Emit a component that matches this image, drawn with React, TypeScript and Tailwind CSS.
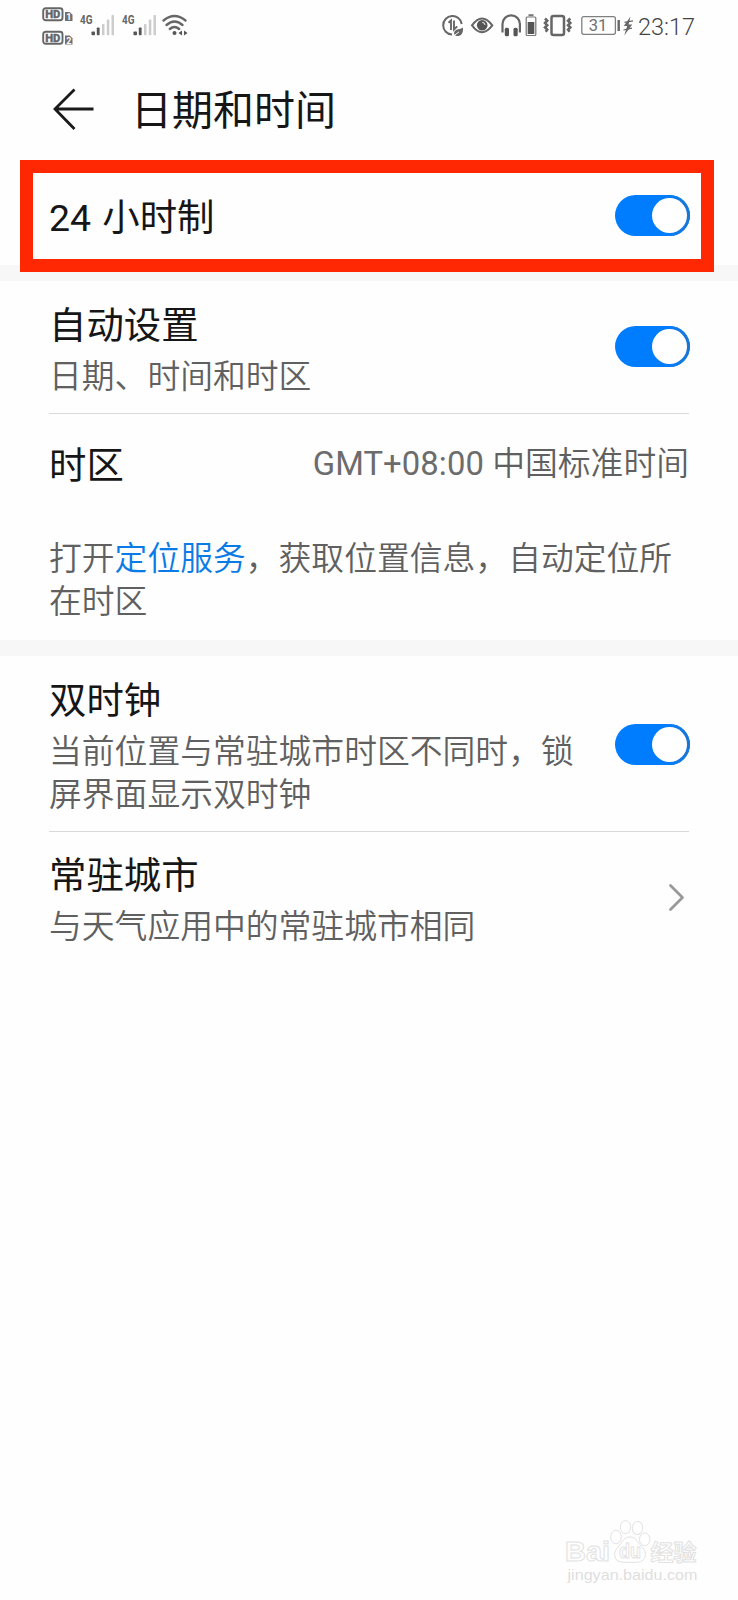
import type { ReactNode } from "react";

function Toggle() {
  return (
    <button
      type="button"
      role="switch"
      aria-checked="true"
      className="flex h-[41px] w-[75.5px] shrink-0 items-center justify-end rounded-full bg-[#007dff]"
    >
      <span className="flex h-[41px] w-[42px] items-center justify-center rounded-full bg-linear-to-r from-[#007dff] from-45% to-[#1b76cf]">
        <span className="h-[35px] w-[35px] rounded-full bg-white" />
      </span>
    </button>
  );
}

function Title({ children }: { children: ReactNode }) {
  return <div className="text-[37.4px] leading-[50px] font-normal text-[#161616]">{children}</div>;
}

function Summary({ children }: { children: ReactNode }) {
  return <div className="text-[32.8px] leading-[43px] text-[#606060]">{children}</div>;
}

function SignalBars({ x }: { x: number }) {
  return (
    <g transform={`translate(${x} 0)`}>
      <text x="0" y="24" fontSize="12.5" fontWeight="700" fill="#666" textLength="12.5" lengthAdjust="spacingAndGlyphs">4G</text>
      <rect x="11.5" y="31.5" width="3.5" height="3.8" rx="0.8" fill="#555" />
      <rect x="16.8" y="27.5" width="2.8" height="7.8" rx="0.8" fill="#555" />
      <rect x="22" y="24" width="2.5" height="11.3" rx="0.8" fill="#ccc" />
      <rect x="26.8" y="19.5" width="2.5" height="15.8" rx="0.8" fill="#ccc" />
      <rect x="31.5" y="15" width="2.5" height="20.3" rx="0.8" fill="#ccc" />
    </g>
  );
}

function HdBadge({ y, n }: { y: number; n: string }) {
  return (
    <g transform={`translate(42 ${y})`}>
      <rect x="1.2" y="1.2" width="19.300" height="12" rx="2.500" fill="#fff" stroke="#666" strokeWidth="1.900" />
      <text x="3.2" y="11.300" fontSize="11.500" fontWeight="900" fill="#666" stroke="#666" strokeWidth="0.300" textLength="15.200" lengthAdjust="spacingAndGlyphs">HD</text>
      <path d="M23 5h4.800l2.700 2.700v6.300H23z" fill="#707070" />
      <text x="24.200" y="13" fontSize="9" fontWeight="700" fill="#fff">{n}</text>
    </g>
  );
}

function StatusLeft() {
  return (
    <svg width="200" height="56" viewBox="0 0 200 56" className="font-[Roboto,sans-serif]">
      <HdBadge y={7} n="1" />
      <HdBadge y={30.5} n="2" />
      <SignalBars x={80} />
      <SignalBars x={122} />
      <g fill="none" stroke="#666" strokeWidth="2.4" strokeLinecap="round">
        <path d="M163.500 20.500Q174.500 11.500 185.500 20.500" />
        <path d="M166.500 25Q174.500 18 182.500 25" />
        <path d="M169.800 29Q174.500 24.800 179.200 29" />
      </g>
      <circle cx="174.500" cy="33" r="2" fill="#555" />
      <path d="M182 30.500v5l-3.500-2.500zM184 30.500v5l3.500-2.500z" fill="#555" />
    </svg>
  );
}

function StatusRight() {
  return (
    <svg width="198" height="56" viewBox="438 0 198 56" className="font-[Roboto,sans-serif]">
      <g fill="none" stroke="#666" strokeWidth="2">
        <path d="M461.700 24A9.300 9.300 0 1 0 452 34.600" />
        <path d="M448.500 22.800l2.500-2.300v9.500M454 20.500v9l3.200-3.200" strokeWidth="1.900" />
        <path d="M472 25.300Q482 11.500 492.300 25.300Q482 39 472 25.300Z" />
      </g>
      <path d="M463 27.500c.5 6-2 8.500-5.500 8.500-3 0-4.200-2.500-2.800-4.800 1.800-2.500 5-1.200 8.300-3.700z" fill="#666" />
      <path d="M454 35.800l5-4" stroke="#fff" strokeWidth="1" />
      <circle cx="482.200" cy="25.200" r="5.300" fill="#555" />
      <path d="M482.200 22.300a3 3 0 0 1 2.800 2.700" fill="none" stroke="#ccc" strokeWidth="1.200" />
      <path d="M502.500 32.500V24a8.700 8.700 0 0 1 17.400 0v8.500" fill="none" stroke="#666" strokeWidth="2.200" />
      <rect x="504.800" y="27.700" width="4.200" height="8.500" rx="1.500" fill="#555" />
      <rect x="513.500" y="27.700" width="4.200" height="8.500" rx="1.500" fill="#555" />
      <rect x="526.200" y="17" width="9.600" height="18.500" rx="1" fill="none" stroke="#777" strokeWidth="1.200" />
      <rect x="528.500" y="14.200" width="5" height="2" fill="#777" />
      <rect x="527.700" y="22" width="6.600" height="12" fill="#555" />
      <rect x="551.500" y="16" width="12.500" height="19" rx="2" fill="none" stroke="#666" strokeWidth="2.500" />
      <path d="M545 18.500l2.200 2.200-2.200 2.300 2.200 2.200-2.200 2.300 2.200 2.200-1.500 2M570.300 18.500l-2.200 2.200 2.200 2.300-2.200 2.200 2.200 2.300-2.200 2.200 1.500 2" fill="none" stroke="#666" strokeWidth="2.600" />
      <rect x="581.800" y="16.700" width="33.600" height="17.600" rx="2" fill="none" stroke="#808080" strokeWidth="1.300" />
      <text x="598" y="31.300" fontSize="16.500" fontWeight="400" fill="#707070" textAnchor="middle">31</text>
      <rect x="617.500" y="20" width="2.400" height="11" fill="#666" />
      <path d="M630.500 16.500l-6.700 9.500h3.400l-3 9.500 8-11h-3.600z" fill="#666" />
      <path d="M624.500 22.300l8.500-1.500M623.500 30l8.500-1.800" stroke="#666" strokeWidth="1.200" />
    </svg>
  );
}

function Watermark() {
  return (
    <svg
      width="140"
      height="70"
      viewBox="0 0 140 70"
      className="font-['Liberation_Sans','Noto_Sans_CJK_SC',sans-serif]"
      fill="#fff"
      stroke="#e2e2e2"
      strokeWidth="1"
    >
      <text x="3" y="41" fontSize="28" fontWeight="700" textLength="45" lengthAdjust="spacingAndGlyphs">Bai</text>
      <ellipse cx="54" cy="17" rx="5.300" ry="6.800" />
      <ellipse cx="63.500" cy="7.200" rx="5.200" ry="6.500" />
      <ellipse cx="75.500" cy="8" rx="5.200" ry="6.500" transform="rotate(8 75.500 8)" />
      <ellipse cx="82.700" cy="19.300" rx="5.200" ry="6.300" />
      <path d="M68 17c6 0 7.500 5 11 9 4 4 5 7 4 11-1.500 5-6 5.500-15 5.300-9 .2-13.500-.3-15-5.300-1-4 0-7 4-11 3.500-4 5-9 11-9z" />
      <text x="57" y="38" fontSize="21" fontWeight="700" textLength="22" lengthAdjust="spacingAndGlyphs">du</text>
      <text x="88.500" y="39.500" fontSize="22" fontWeight="700" textLength="46" lengthAdjust="spacingAndGlyphs">经验</text>
      <text x="5.500" y="60" fontSize="15" fontWeight="400" fill="#dedede" stroke="none" textLength="130" lengthAdjust="spacingAndGlyphs">jingyan.baidu.com</text>
    </svg>
  );
}

export default function App() {
  return (
    <div className="relative flex h-[1600px] w-[738px] flex-col overflow-hidden bg-[#fefefe] font-[Roboto,'Noto_Sans_CJK_SC',sans-serif] font-[350]">
      <div className="flex h-14 shrink-0 items-start justify-between pr-[42px]">
        <StatusLeft />
        <div className="flex">
          <StatusRight />
          <span className="ml-[2px] w-[58px] whitespace-nowrap pt-[12px] text-[23.5px] leading-[30px] font-light text-[#444]">23:17</span>
        </div>
      </div>

      <header className="flex h-[104px] shrink-0 items-center pb-[1px] pl-[52px]">
        <svg width="43" height="43" viewBox="0 0 43 43" fill="none" stroke="#1a1a1a" strokeWidth="2.800" className="mt-[3px]">
          <path d="M41.500 21H3M22.500 1.500L3 21l19.500 20" />
        </svg>
        <h1 className="ml-[36px] mt-[6px] text-[41px] leading-[56px] font-normal text-[#161616]">日期和时间</h1>
      </header>

      <section className="flex h-[105px] shrink-0 items-center justify-between pl-[49px] pr-[48px] pt-[6px]">
        <div className="pt-[4px]">
          <Title>
            24<span className="ml-[2px]"> 小时制</span>
          </Title>
        </div>
        <Toggle />
      </section>

      <div className="h-4 shrink-0 bg-[#f7f7f7]" />

      <section className="flex h-[359px] shrink-0 flex-col pl-[49px] pr-[49px]">
        <div className="flex h-[133px] items-center justify-between border-b border-[#d9d9d9]">
          <div className="pt-[6px]">
            <Title>自动设置</Title>
            <div className="mt-[5px]">
              <Summary>日期、时间和时区</Summary>
            </div>
          </div>
          <div className="-mr-px pb-[1px]">
            <Toggle />
          </div>
        </div>
        <div className="flex h-[100px] items-center justify-between">
          <div className="pt-[3px]">
            <Title>时区</Title>
          </div>
          <div className="whitespace-nowrap pt-[1px]">
            <Summary>
              <span className="font-normal tracking-[0.1px] text-[#6c6c6c]">GMT+08:00 </span>中国标准时间
            </Summary>
          </div>
        </div>
        <div className="mt-[24px] whitespace-nowrap">
          <Summary>
            打开<a className="text-[#0a7be6]">定位服务</a>，获取位置信息，自动定位所
            <br />
            在时区
          </Summary>
        </div>
      </section>

      <div className="h-4 shrink-0 bg-[#f7f7f7]" />

      <section className="flex shrink-0 flex-col pl-[49px] pr-[49px]">
        <div className="flex h-[176px] items-center justify-between border-b border-[#d9d9d9]">
          <div className="whitespace-nowrap pt-[5px]">
            <Title>双时钟</Title>
            <div className="mt-[5px]">
              <Summary>
                当前位置与常驻城市时区不同时，锁
                <br />
                屏界面显示双时钟
              </Summary>
            </div>
          </div>
          <div className="-mr-px pt-[1px]">
            <Toggle />
          </div>
        </div>
        <div className="flex h-[132px] items-center justify-between">
          <div className="pt-[4px]">
            <Title>常驻城市</Title>
            <div className="mt-[5px]">
              <Summary>与天气应用中的常驻城市相同</Summary>
            </div>
          </div>
          <svg width="24" height="30" viewBox="0 0 24 30" fill="none" stroke="#999" strokeWidth="2.800" strokeLinecap="round" strokeLinejoin="round">
            <path d="M5.500 2.500l12 12-12 12" />
          </svg>
        </div>
      </section>

      <div className="absolute left-[20px] top-[160px] h-[112px] w-[694px] border-[13px] border-[#ff2803]" />

      <div className="absolute bottom-[10px] right-[36px]">
        <Watermark />
      </div>
    </div>
  );
}
